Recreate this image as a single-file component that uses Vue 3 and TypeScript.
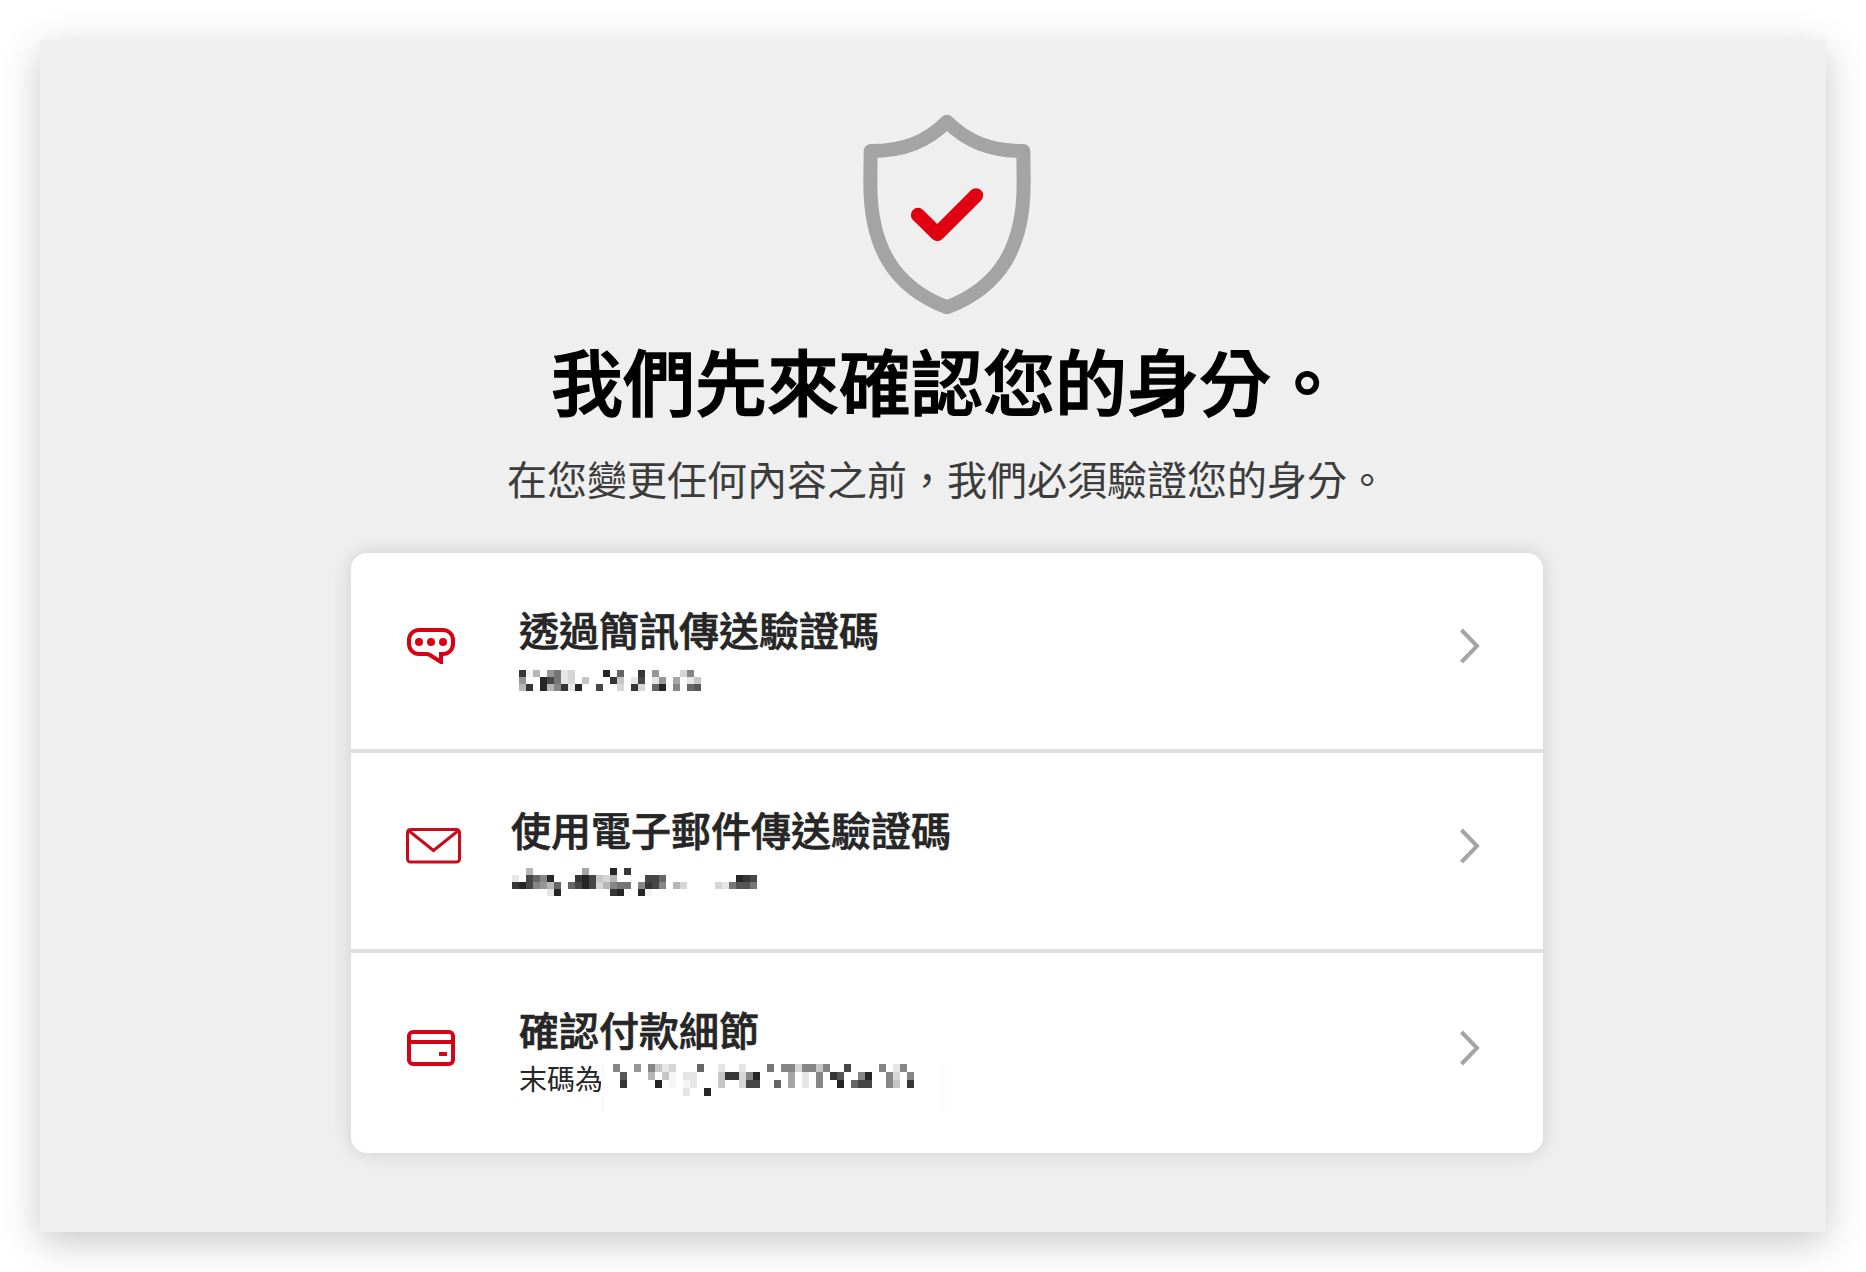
<script setup lang="ts">
interface Method {
  id: 'sms' | 'email' | 'payment'
  title: string
  prefix?: string
  cellHeight: number
  mask: string[]
}

// Masked contact details: one hex digit per cell gives its grey level, a dot is empty.
const methods: Method[] = [
  {
    id: 'sms',
    title: '透過簡訊傳送驗證碼',
    cellHeight: 7,
    mask: [
      '3fb.97ed....2.6..3.9...d8.',
      '9..247ed.c...3c.e4.e9.a.ec',
      'b3.2b83e2..4..d.3d.62.8.65',
    ],
  },
  {
    id: 'email',
    title: '使用電子郵件傳送驗證碼',
    cellHeight: 7,
    mask: [
      '..b.......a...2.3..................',
      'e.4682...324cdb....446..........234',
      '32489b6.6424db877.8348.bd....de7557',
      '.....e2.......32..2f...............',
    ],
  },
  {
    id: 'payment',
    title: '確認付款細節',
    prefix: '末碼為',
    cellHeight: 8,
    mask: [
      '8..9.8ced...6..e..e...7.88d88c8..4....8.e8.',
      '.5...b.cf.ee...c33d82....a.e.8.35..82..8d.8',
      '.3....2.f.fe...c..d44..6.a.e.8..2.644..8c.3',
      '..........e..2.............................',
    ],
  },
]

const cells = (m: Method) =>
  m.mask.flatMap((line, y) =>
    [...line].flatMap((c, x) => (c === '.' ? [] : [{ x: x * 7, y: y * m.cellHeight, fill: c === 'f' ? '#f5f5f5' : `#${c}6${c}6${c}6` }])),
  )
</script>

<template>
  <main class="panel">
    <svg class="shield" viewBox="69 42 504 606" fill="none" stroke-linecap="round" stroke-linejoin="round">
      <path
        d="M321 65C260 126 190 153 92 153L91 250C91 440 160 560 321 622C482 560 551 440 551 250L550 153C452 153 382 126 321 65Z"
        stroke="#a4a4a4"
        stroke-width="42"
      />
      <path d="M234 345L292 402L408 286" stroke="#e00012" stroke-width="43" />
    </svg>
    <h1 class="heading">我們先來確認您的身分。</h1>
    <p class="lead">在您變更任何內容之前，我們必須驗證您的身分。</p>

    <ul class="card">
      <li v-for="m in methods" :key="m.id" class="row" :class="m.id">
        <div class="icon">
          <svg v-if="m.id === 'sms'" width="48" height="36" viewBox="0 0 48 36" fill="none" stroke="#d80012" stroke-width="4">
            <path d="M12 2H36A10 10 0 0 1 46 12V16A10 10 0 0 1 36 26H34V34L22.5 26.8Q21.3 26 20 26H12A10 10 0 0 1 2 16V12A10 10 0 0 1 12 2Z" />
            <g fill="#d80012" stroke="none">
              <circle cx="12" cy="14" r="4" />
              <circle cx="24" cy="14" r="4" />
              <circle cx="36" cy="14" r="4" />
            </g>
          </svg>
          <svg v-else-if="m.id === 'email'" width="55" height="36" viewBox="0 0 55 36" fill="none" stroke="#c90c1c" stroke-width="3">
            <rect x="1.5" y="1.5" width="52" height="32.5" rx="3" />
            <path d="M2.5 2.5L27.5 22.5L52.5 2.5" />
          </svg>
          <svg v-else width="48" height="36" viewBox="0 0 48 36" fill="none" stroke="#d20416" stroke-width="4">
            <rect x="2" y="2" width="44" height="32" rx="4" />
            <path d="M2 12H46M32 24H40" />
          </svg>
        </div>
        <div class="body">
          <h2 class="title">{{ m.title }}</h2>
          <div class="detail">
            <span v-if="m.prefix" class="prefix">{{ m.prefix }}</span>
            <span class="mask">
              <svg
                :width="m.mask[0].length * 7"
                :height="m.mask.length * m.cellHeight"
                shape-rendering="crispEdges"
              >
                <rect v-for="(c, i) in cells(m)" :key="i" :x="c.x" :y="c.y" width="7" :height="m.cellHeight" :fill="c.fill" />
              </svg>
            </span>
          </div>
        </div>
        <svg class="chevron" width="20" height="36" viewBox="0 0 20 36" fill="none" stroke="#a4a4a4" stroke-width="4">
          <path d="M1.5 2L17 18L1.5 34" />
        </svg>
      </li>
    </ul>
  </main>
</template>

<style>
body {
  background: #fff;
}
</style>

<style scoped>
.panel {
  box-sizing: border-box;
  width: 1786px;
  height: 1192px;
  margin: 40px;
  padding: 74px 0 0 28px;
  display: flex;
  flex-direction: column;
  align-items: center;
  background: #efefef;
  box-shadow: 0 10px 36px rgba(0, 0, 0, 0.22);
  font-family: "Noto Sans CJK TC", sans-serif;
}
.shield {
  width: 168px;
  height: 202px;
}
.heading {
  margin: 11px 0 0;
  font-size: 72px;
  line-height: 104px;
  font-weight: 500;
  color: #000;
  -webkit-text-stroke: 1.4px #000;
}
.lead {
  margin: 18px 0 0;
  font-size: 40px;
  line-height: 58px;
  font-weight: 400;
  color: #3c3c3c;
}
.card {
  width: 1192px;
  height: 600px;
  margin: 46px 0 0;
  padding: 0;
  list-style: none;
  background: #fff;
  border-radius: 16px;
  box-shadow: 0 0 20px rgba(0, 0, 0, 0.14);
}
.row {
  box-sizing: border-box;
  height: 200px;
  display: flex;
  align-items: flex-start;
  padding: 47px 63px 0 56px;
  border-bottom: 4px solid #dfdfdf;
}
.row:last-child {
  border-bottom: 0;
}
.icon {
  width: 112px;
  padding-top: 28px;
}
.email .icon {
  width: 105px;
  margin-left: -1px;
}
.icon svg,
.chevron,
.mask svg {
  display: block;
}
.body {
  flex: 1;
}
.title {
  margin: 0;
  font-size: 40px;
  line-height: 58px;
  font-weight: 500;
  color: #262626;
  -webkit-text-stroke: 0.7px #262626;
}
.detail {
  display: flex;
  align-items: flex-start;
  font-size: 28px;
  line-height: 40px;
  color: #262626;
}
.sms .mask {
  margin-top: 12px;
}
.email .mask {
  margin: 10px 0 0 1px;
}
.payment .icon {
  padding-top: 30px;
}
.payment .mask {
  flex: none;
  height: 48px;
  margin: 6px 0 0 -2px;
  padding: 0 27px 0 8px;
  border: solid #fbfbfb;
  border-width: 0 4px;
}
.chevron {
  margin-top: 28px;
}
.payment .chevron {
  margin-top: 30px;
}
</style>
